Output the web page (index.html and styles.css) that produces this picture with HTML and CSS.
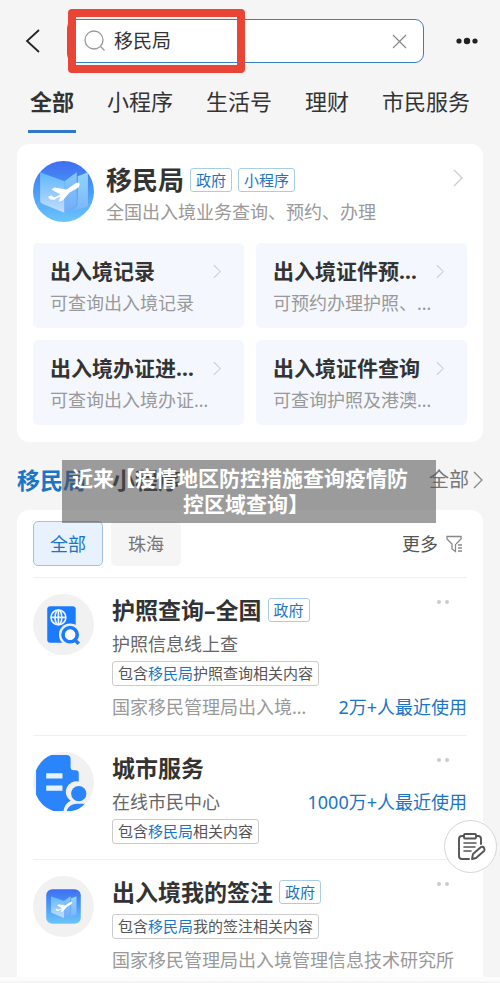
FILE: index.html
```html
<!DOCTYPE html>
<html lang="zh-CN">
<head>
<meta charset="utf-8">
<meta name="viewport" content="width=device-width, initial-scale=1">
<title>移民局 - 搜索</title>
<link rel="stylesheet" href="styles.css">
</head>
<body>
<svg class="defs" width="0" height="0" aria-hidden="true">
  <defs>
    <linearGradient id="sky" x1="0" y1="0" x2="0" y2="1">
      <stop offset="0" stop-color="#3f6df2"/><stop offset=".5" stop-color="#4a9cf6"/><stop offset="1" stop-color="#6cc6fb"/>
    </linearGradient>
    <linearGradient id="fold" x1="0" y1="0" x2="0" y2="1">
      <stop offset="0" stop-color="#5fb6fa"/><stop offset="1" stop-color="#c3defd"/>
    </linearGradient>
    <linearGradient id="fold2" x1="0" y1="0" x2="0" y2="1">
      <stop offset="0" stop-color="#8fd6fc"/><stop offset="1" stop-color="#7fb4f8"/>
    </linearGradient>
    <symbol id="map" viewBox="0 0 60 60">
      <path d="M44 15 54 11V43Q54 45 52 45.500L38 49Q44 46 44 40Z" fill="url(#fold2)"/>
      <path d="M7 11 31 20V51L9 42Q7 41 7 39Z" fill="url(#fold)"/>
      <path d="M31 20 43 11V39Q43 44 39 46L31 51Z" fill="url(#fold2)"/>
      <path d="M31 51V20L43 11V39Q43 44 38 47Z" fill="#4f93f3" opacity=".2"/>
      <path d="M15 35 18 34 21 36 27 33 18 28 21 26 33 28 42 22Q46 20 46 23 46 25 43 27L36 31 29 39 25 40 27 35 21 38Q16 39 15 35Z" fill="#fff"/>
    </symbol>
    <symbol id="chevron" viewBox="0 0 10 18"><path d="M1 1 9 9 1 17" fill="none" stroke="currentColor" stroke-width="1.300"/></symbol>
  </defs>
</svg>

<header class="topbar">
  <button class="plain back" type="button" aria-label="返回">
    <svg width="16" height="26" viewBox="0 0 16 26"><path d="M14 2 2 13 14 24" fill="none" stroke="#222" stroke-width="1.800"/></svg>
  </button>
  <form class="search">
    <svg width="22" height="22" viewBox="0 0 22 22" fill="none" stroke="#999" stroke-width="1.300"><circle cx="10" cy="10" r="9"/><path d="m16.500 16.500 4 4"/></svg>
    <input type="text" value="移民局" aria-label="搜索">
    <button class="plain clear" type="button" aria-label="清除">
      <svg width="15" height="15" viewBox="0 0 15 15"><path d="m1 1 13 13M14 1 1 14" stroke="#888" stroke-width="1.200"/></svg>
    </button>
    <span class="highlight"></span>
  </form>
  <button class="plain more" type="button" aria-label="更多操作">
    <svg width="22" height="8" viewBox="0 0 22 8" fill="#222"><circle cx="3" cy="4" r="2.600"/><circle cx="11" cy="4" r="3.200"/><circle cx="19" cy="4" r="2.600"/></svg>
  </button>
</header>

<nav class="tabs">
  <a class="tab active" href="#">全部</a>
  <a class="tab" href="#">小程序</a>
  <a class="tab" href="#">生活号</a>
  <a class="tab" href="#">理财</a>
  <a class="tab" href="#">市民服务</a>
</nav>

<main>
  <section class="card hero">
    <div class="hero-head">
      <svg class="avatar" viewBox="0 0 60 60"><circle cx="30" cy="30" r="30" fill="url(#sky)"/><use href="#map" width="60" height="60"/></svg>
      <div class="hero-text">
        <div class="name-line"><h1>移民局</h1><span class="tag">政府</span><span class="tag">小程序</span></div>
        <p class="muted">全国出入境业务查询、预约、办理</p>
      </div>
      <svg class="chev chev-lg"><use href="#chevron"/></svg>
    </div>
    <div class="links">
      <a class="link" href="#"><span class="link-title"><b>出入境记录</b><svg class="chev"><use href="#chevron"/></svg></span><span class="muted">可查询出入境记录</span></a>
      <a class="link" href="#"><span class="link-title"><b>出入境证件预…</b><svg class="chev"><use href="#chevron"/></svg></span><span class="muted">可预约办理护照、…</span></a>
      <a class="link" href="#"><span class="link-title"><b>出入境办证进…</b><svg class="chev"><use href="#chevron"/></svg></span><span class="muted">可查询出入境办证…</span></a>
      <a class="link" href="#"><span class="link-title"><b>出入境证件查询</b><svg class="chev"><use href="#chevron"/></svg></span><span class="muted">可查询护照及港澳…</span></a>
    </div>
  </section>

  <div class="section-head">
    <h2><em>移民局</em><span>小程序</span></h2>
    <a class="all" href="#">全部<svg class="chev chev-lg"><use href="#chevron"/></svg></a>
    <div class="banner">近来【疫情地区防控措施查询疫情防控区域查询】</div>
  </div>

  <section class="card results">
    <div class="filters">
      <button class="chip on" type="button">全部</button>
      <button class="chip" type="button">珠海</button>
      <button class="plain filter" type="button">更多
        <svg width="17" height="18" viewBox="0 0 17 18" fill="none" stroke="#888" stroke-width="1.300"><path d="M10 9 15 4V1.500H1V4L6 9V14L9.500 16.500V9"/><path d="M12 10h4M12 13h4M12 16h4"/></svg>
      </button>
    </div>

    <article class="row">
      <svg class="avatar" viewBox="0 0 60 60">
        <circle cx="30" cy="30" r="30" fill="#f1f1f1"/>
        <rect x="14" y="12" width="28" height="36" rx="3" fill="#1b7bff"/>
        <g fill="none" stroke="#eef5ff" stroke-width="1.600"><circle cx="25" cy="23" r="7.300"/><ellipse cx="25" cy="23" rx="3.300" ry="7.300"/><path d="M25 16v14M18 23h14"/></g>
        <circle cx="36.500" cy="40" r="11" fill="#f1f1f1"/>
        <circle cx="36.500" cy="40" r="7" fill="#fff" stroke="#1b7bff" stroke-width="3.500"/>
        <path d="m41 45 4 4" stroke="#1b7bff" stroke-width="3.500"/>
      </svg>
      <div class="info">
        <div class="name-line"><h3>护照查询–全国</h3><span class="tag">政府</span></div>
        <div class="line">护照信息线上查</div>
        <span class="note">包含<em>移民局</em>护照查询相关内容</span>
        <div class="line foot"><span class="muted">国家移民管理局出入境…</span><span class="used">2万+人最近使用</span></div>
      </div>
      <button class="plain dots" type="button" aria-label="更多"><i></i><i></i></button>
    </article>

    <article class="row">
      <svg class="avatar" viewBox="0 0 60 60">
        <circle cx="30" cy="30" r="30" fill="#f1f1f1"/>
        <path d="M18 3H33Q37 3 37 7V15Q37 18 40 18H42Q45 18 45 21V29A10.500 10.500 0 0 0 37 48Q31 51 30 58H20Q8 54 3 42V18Q8 7 18 3Z" fill="#2a84fb"/>
        <path d="M13 21h16v5H13zM13 33h16v5H13z" fill="#e6f2ff"/>
        <circle cx="45" cy="41" r="7.500" fill="#2a84fb"/>
        <path d="M33 58Q36 51 43 51H51Q46 57 38 58Z" fill="#2a84fb"/>
      </svg>
      <div class="info">
        <div class="name-line"><h3>城市服务</h3></div>
        <div class="line"><span>在线市民中心</span><span class="used">1000万+人最近使用</span></div>
        <span class="note">包含<em>移民局</em>相关内容</span>
      </div>
      <button class="plain dots" type="button" aria-label="更多"><i></i><i></i></button>
    </article>

    <article class="row">
      <svg class="avatar" viewBox="0 0 60 60">
        <circle cx="30" cy="30" r="30" fill="#f1f1f1"/>
        <rect x="13" y="13" width="34" height="34" rx="6" fill="url(#sky)"/>
        <use href="#map" x="14" y="14" width="32" height="32"/>
      </svg>
      <div class="info">
        <div class="name-line"><h3>出入境我的签注</h3><span class="tag">政府</span></div>
        <span class="note first">包含<em>移民局</em>我的签注相关内容</span>
        <div class="line foot"><span class="muted">国家移民管理局出入境管理信息技术研究所</span></div>
      </div>
      <button class="plain dots" type="button" aria-label="更多"><i></i><i></i></button>
    </article>
  </section>
</main>

<button class="plain fab" type="button" aria-label="反馈">
  <svg width="30" height="30" viewBox="0 0 30 30" fill="none" stroke="#555" stroke-width="1.900" stroke-linejoin="round" stroke-linecap="round">
    <path d="M8 4H6Q3 4 3 7V24Q3 27 6 27H13M20 4H22Q25 4 25 7V12"/><rect x="8" y="2" width="12" height="4.500" rx="1"/>
    <path d="M8 11h12M8 15h11M8 19h7" stroke-width="1.600"/><path d="m16 27 1-5 8-7q2-1 3 1t0 3l-8 7Z"/>
  </svg>
</button>
</body>
</html>
```

FILE: styles.css
```css
* { box-sizing: border-box; }
body {
  margin: 0;
  background: #f5f5f5;
  color: #333;
  font-family: "Noto Sans", "Noto Sans CJK SC", sans-serif;
  font-size: 18px;
  line-height: 26px;
}
h1, h2, h3, p { margin: 0; }
a { color: inherit; text-decoration: none; }
em { font-style: normal; color: #1c74c4; }
svg { flex: none; display: block; }
.defs { position: absolute; }
.plain {
  border: 0;
  padding: 0;
  background: none;
  font: inherit;
  color: inherit;
  display: flex;
  align-items: center;
}

.topbar {
  display: flex;
  align-items: center;
  padding: 19px 22px 0 25px;
}
.search {
  position: relative;
  flex: 1;
  min-width: 0;
  height: 44px;
  margin: 0 32px 0 26px;
  padding: 0 16px;
  display: flex;
  align-items: center;
  gap: 8px;
  background: #fff;
  border: 1px solid #3a7fc0;
  border-radius: 9px;
}
.search input {
  flex: 1;
  min-width: 0;
  border: 0;
  outline: 0;
  padding: 0;
  background: none;
  font: inherit;
  font-size: 19px;
  color: #333;
}
.highlight {
  position: absolute;
  left: 0;
  top: -11px;
  width: 177px;
  height: 64px;
  border: 8px solid #e84537;
  border-radius: 4px;
  pointer-events: none;
}

.tabs {
  display: flex;
  justify-content: space-between;
  padding: 21px 30px 0;
  font-size: 22px;
  line-height: 34px;
}
.tab.active {
  position: relative;
  font-weight: 700;
  padding-bottom: 15px;
}
.tab.active::after {
  content: "";
  position: absolute;
  left: -2px;
  right: -2px;
  bottom: 0;
  height: 3px;
  background: #3076c9;
}

main {
  padding: 11px 17px 0;
  border-bottom: 4px solid #fcfcfc;
}
.card {
  background: #fff;
  border-radius: 12px;
  padding: 0 16px;
}
.avatar { width: 61px; height: 61px; }
.hero { padding-top: 17px; padding-bottom: 17px; }
.hero-head { display: flex; }
.hero-text { flex: 1; margin-left: 12px; }
.name-line { display: flex; align-items: center; gap: 6px; }
h1 { font-size: 26px; line-height: 38px; }
.muted { color: #999; }
.tag {
  border: 1px solid #a9cde3;
  border-radius: 3px;
  padding: 0 5px;
  font-size: 15px;
  line-height: 22px;
  color: #1c74c4;
}
.chev { width: 8px; height: 15px; color: #ccc; }
.chev-lg { width: 10px; height: 18px; }
.hero .chev-lg { margin: 8px 4px 0 0; }

.links {
  display: grid;
  grid-template-columns: 1fr 1fr;
  gap: 12px;
  margin-top: 18px;
}
.link {
  background: #f4f7fe;
  border-radius: 5px;
  padding: 11px 17px 12px;
  min-width: 0;
}
.link-title {
  display: flex;
  align-items: center;
  justify-content: space-between;
  padding-right: 6px;
  font-size: 21px;
  line-height: 34px;
  white-space: nowrap;
}
.link .muted { display: block; margin-top: 2px; white-space: nowrap; }

.section-head {
  position: relative;
  display: flex;
  align-items: center;
  justify-content: space-between;
  height: 68px;
  padding-top: 8px;
}
h2 {
  display: flex;
  gap: 26px;
  font-size: 23px;
  line-height: 34px;
}
.all {
  display: flex;
  align-items: center;
  gap: 4px;
  font-size: 20px;
  color: #777;
}
.all .chev { color: #888; }
.banner {
  position: absolute;
  left: 45px;
  right: 47px;
  top: 18px;
  padding: 5px 18px 6px 12px;
  background: rgba(80, 80, 80, .55);
  color: #fff;
  font-size: 21px;
  font-weight: 700;
  line-height: 26px;
  text-align: center;
  text-indent: -12px;
}

.results { border-bottom-left-radius: 0; border-bottom-right-radius: 0; }
.filters {
  display: flex;
  align-items: center;
  gap: 8px;
  padding: 11px 0;
}
.chip {
  width: 70px;
  height: 45px;
  padding: 0;
  border: 1px solid #f5f5f5;
  border-radius: 5px;
  background: #f5f5f5;
  color: #777;
  font: inherit;
}
.chip.on { background: #e7f2fe; border-color: #9fc3dd; color: #1c74c4; }
.filter { margin-left: auto; margin-right: 4px; gap: 8px; color: #555; }

.row {
  position: relative;
  display: flex;
  gap: 18px;
  padding: 16px 0 15px;
  border-top: 1px solid #f0f0f0;
}
.row:last-child { padding-bottom: 4px; }
.info { flex: 1; min-width: 0; }
h3 { font-size: 23px; line-height: 32px; }
.line {
  display: flex;
  justify-content: space-between;
  margin: 5px 0 4px;
  color: #666;
  white-space: nowrap;
}
.foot { margin: 8px 0 0; }
.used { color: #1c74c4; }
.note {
  display: block;
  width: fit-content;
  border: 1px solid #ccc;
  border-radius: 3px;
  padding: 0 5px;
  font-size: 15px;
  line-height: 23px;
  color: #555;
}
.note.first { margin-top: 6px; }
.dots {
  position: absolute;
  right: 18px;
  top: 22px;
  gap: 4px;
}
.dots i { width: 4px; height: 4px; border-radius: 50%; background: #ccc; }

.fab {
  position: fixed;
  right: 3px;
  bottom: 110px;
  width: 53px;
  height: 53px;
  justify-content: center;
  border: 1px solid #d5d5d5;
  border-radius: 50%;
  background: #fff;
}
```
